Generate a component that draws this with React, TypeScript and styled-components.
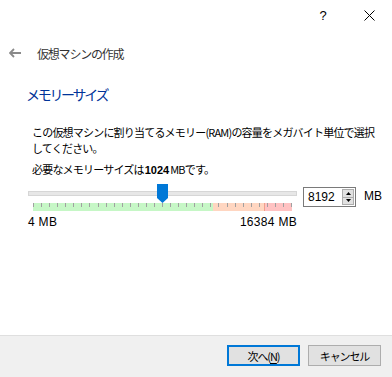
import React from 'react'
import styled, { createGlobalStyle } from 'styled-components'

const GlobalStyle = createGlobalStyle`
  html, body {
    margin: 0;
    padding: 0;
    background: #ffffff;
  }
  body {
    font-family: "Noto Sans CJK JP", "Noto Sans", sans-serif;
    color: #000;
  }
`

const Window = styled.div`
  width: 392px;
  height: 377px;
  display: flex;
  flex-direction: column;
  background: #ffffff;
  overflow: hidden;
`

const TitleBar = styled.div`
  height: 30px;
  display: flex;
  justify-content: flex-end;
  align-items: center;
`

const TitleButton = styled.div`
  width: 46px;
  height: 30px;
  display: flex;
  align-items: center;
  justify-content: center;
  font-family: "Liberation Sans", sans-serif;
  font-size: 13px;
  color: #000;
`

const Header = styled.div`
  height: 46px;
  display: flex;
  align-items: center;
  padding-left: 9px;
  gap: 16px;
`

const HeaderTitle = styled.div`
  font-size: 12px;
  letter-spacing: -1.2px;
  color: #333;
`

const Body = styled.div`
  flex: 1;
  padding: 8px 10px 0 26px;
  display: flex;
  flex-direction: column;
`

const SectionTitle = styled.div`
  font-size: 14px;
  letter-spacing: -2.3px;
  color: #003399;
  line-height: 20px;
  margin-bottom: 20px;
`

const Description = styled.p`
  margin: 0 0 0 6px;
  font-size: 11px;
  line-height: 16px;
  letter-spacing: -0.8px;
  white-space: nowrap;
`

const Required = styled.p`
  margin: 6px 0 0 6px;
  font-size: 11px;
  line-height: 14px;
  letter-spacing: -0.8px;
  white-space: nowrap;

  b {
    font-family: "Liberation Sans", sans-serif;
    font-weight: bold;
    letter-spacing: 0;
    margin: 0 1px;
  }
`

const SliderRow = styled.div`
  display: flex;
  align-items: flex-start;
  margin-top: 7px;
  margin-left: 2px;
`

const SliderBlock = styled.div`
  width: 269px;
  display: flex;
  flex-direction: column;
`

const TrackArea = styled.div`
  position: relative;
  height: 19px;
  display: flex;
  align-items: center;
`

const Track = styled.div`
  width: 100%;
  height: 3px;
  background: #e7e7e7;
  border: 1px solid #d6d6d6;
  box-sizing: content-box;
`

const Thumb = styled.svg`
  position: absolute;
  left: 129px;
  top: 0;
`

const Scale = styled.div`
  margin: 0 5px;
  height: 8px;
  display: flex;
  position: relative;
`

const Zone = styled.div<{ $color: string; $w: number; $edge?: string }>`
  width: ${({ $w }) => $w}px;
  background: ${({ $color }) => $color};
  box-sizing: border-box;
  border-left: ${({ $edge }) => ($edge ? `1px solid ${$edge}` : 'none')};
`

const Ticks = styled.div`
  position: absolute;
  left: 0;
  right: 0;
  top: 0;
  height: 4px;
  display: flex;
  justify-content: space-between;
`

const Tick = styled.div`
  width: 1px;
  height: 4px;
  background: #a0a0a0;
`

const ScaleLabels = styled.div`
  display: flex;
  justify-content: space-between;
  margin-top: 4px;
  font-family: "Liberation Sans", sans-serif;
  font-size: 12px;
  letter-spacing: 0.3px;
`

const SpinBox = styled.div`
  margin-left: 6px;
  margin-top: 3px;
  border: 1px solid #7a7a7a;
  display: flex;
  align-items: center;
  justify-content: space-between;
  padding-left: 4px;
  box-sizing: border-box;
  width: 56px;
  height: 20px;
  font-family: "Liberation Sans", sans-serif;
  font-size: 12px;
`

const SpinButtons = styled.div`
  width: 12px;
  height: 16px;
  margin-right: 1px;
  display: flex;
  flex-direction: column;
  border: 1px solid #adadad;
  background: #e1e1e1;
  box-sizing: border-box;
`

const SpinHalf = styled.div`
  flex: 1;
  display: flex;
  align-items: center;
  justify-content: center;
  & + & {
    border-top: 1px solid #adadad;
  }
`

const Unit = styled.div`
  margin-left: 8px;
  margin-top: 5px;
  font-family: "Liberation Sans", sans-serif;
  font-size: 12px;
`

const Footer = styled.div`
  height: 42px;
  box-sizing: border-box;
  border-top: 1px solid #dfdfdf;
  background: #f0f0f0;
  display: flex;
  justify-content: flex-end;
  align-items: flex-start;
  padding: 9px 11px 0 0;
  gap: 8px;
`

const Button = styled.div<{ $default?: boolean }>`
  width: 73px;
  height: 21px;
  box-sizing: border-box;
  border: ${({ $default }) => ($default ? '2px solid #0078d7' : '1px solid #adadad')};
  background: #e1e1e1;
  display: flex;
  align-items: center;
  justify-content: center;
  font-size: 11px;
  letter-spacing: -1.1px;

  u {
    text-underline-offset: 2px;
  }
`

const zones = [
  { color: '#c6f7c6', w: 180 },
  { color: '#ffd6c1', w: 51 },
  { color: '#ffc2c2', w: 28, edge: '#f0a08c' },
]

export default function App() {
  return (
    <Window>
      <GlobalStyle />
      <TitleBar>
        <TitleButton>?</TitleButton>
        <TitleButton>
          <svg width="11" height="11" viewBox="0 0 11 11">
            <path d="M0.5 0.5 L10.5 10.5 M10.5 0.5 L0.5 10.5" stroke="#000" strokeWidth="1" />
          </svg>
        </TitleButton>
      </TitleBar>
      <Header>
        <svg width="12" height="10" viewBox="0 0 12 10">
          <path d="M5 1 L1 5 L5 9 M1 5 H12" stroke="#8a8a8a" strokeWidth="1.8" fill="none" />
        </svg>
        <HeaderTitle>仮想マシンの作成</HeaderTitle>
      </Header>
      <Body>
        <SectionTitle>メモリーサイズ</SectionTitle>
        <Description>
          この仮想マシンに割り当てるメモリー(RAM)の容量をメガバイト単位で選択
          <br />
          してください。
        </Description>
        <Required>
          必要なメモリーサイズは<b>1024</b>MBです。
        </Required>
        <SliderRow>
          <SliderBlock>
            <TrackArea>
              <Track />
              <Thumb width="11" height="19" viewBox="0 0 11 19">
                <path d="M0 0 H11 V14 L5.5 19 L0 14 Z" fill="#0078d7" />
              </Thumb>
            </TrackArea>
            <Scale>
              {zones.map((z, i) => (
                <Zone key={i} $color={z.color} $w={z.w} $edge={z.edge} />
              ))}
              <Ticks>
                {Array.from({ length: 33 }).map((_, i) => (
                  <Tick key={i} />
                ))}
              </Ticks>
            </Scale>
            <ScaleLabels>
              <span>4 MB</span>
              <span>16384 MB</span>
            </ScaleLabels>
          </SliderBlock>
          <SpinBox>
            <span>8192</span>
            <SpinButtons>
              <SpinHalf>
                <svg width="5" height="3" viewBox="0 0 5 3">
                  <path d="M2.5 0 L5 3 H0 Z" fill="#000" />
                </svg>
              </SpinHalf>
              <SpinHalf>
                <svg width="5" height="3" viewBox="0 0 5 3">
                  <path d="M0 0 H5 L2.5 3 Z" fill="#000" />
                </svg>
              </SpinHalf>
            </SpinButtons>
          </SpinBox>
          <Unit>MB</Unit>
        </SliderRow>
      </Body>
      <Footer>
        <Button $default>
          次へ(<u>N</u>)
        </Button>
        <Button>キャンセル</Button>
      </Footer>
    </Window>
  )
}
